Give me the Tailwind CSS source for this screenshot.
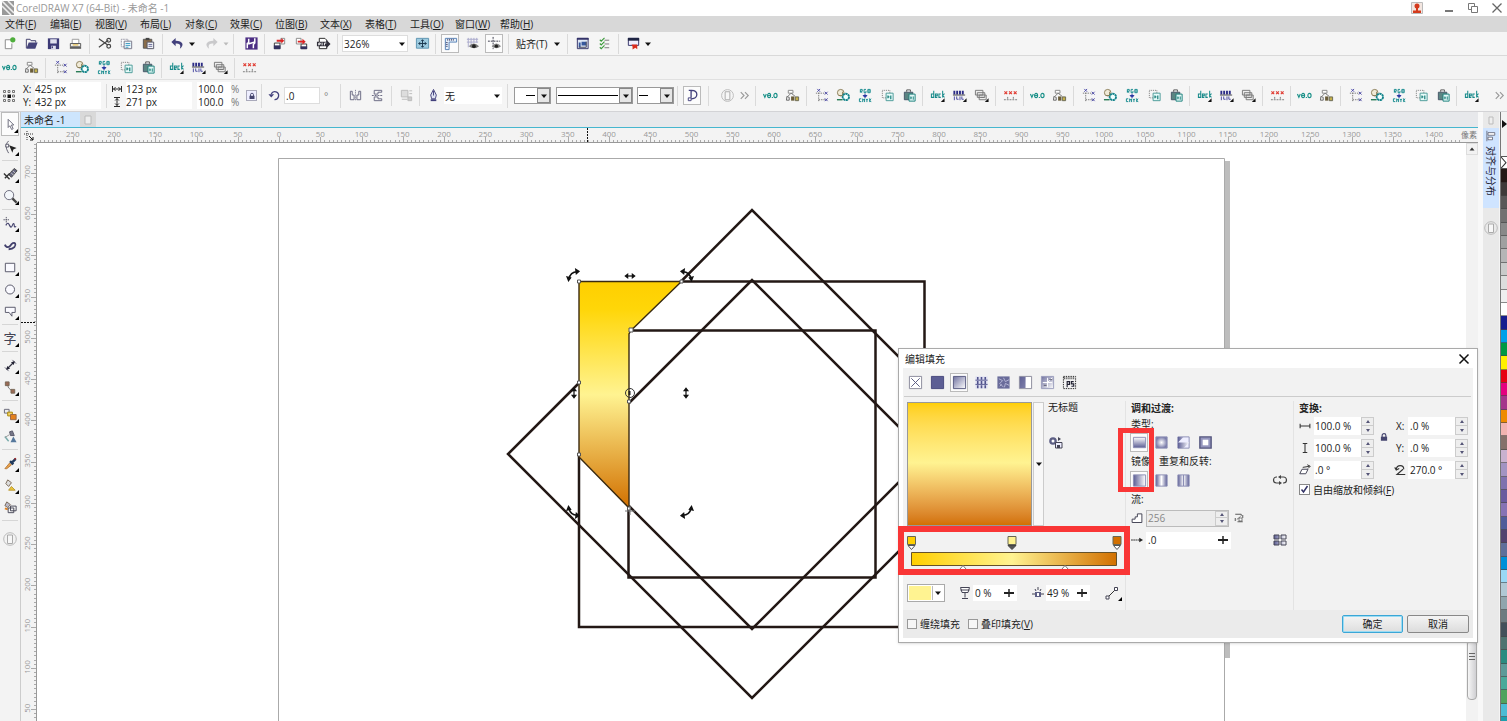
<!DOCTYPE html>
<html lang="zh-CN">
<head>
<meta charset="utf-8">
<title>CorelDRAW X7 (64-Bit) - 未命名 -1</title>
<script src="https://cdn.jsdelivr.net/npm/@tailwindcss/browser@4"></script>
</head>
<body class="h-screen overflow-hidden bg-[#f4f4f4] text-[#222] text-[10px] leading-none font-['Open_Sans','Noto_Sans_CJK_SC',sans-serif]">
<!-- icon library, 16 x 16 grid -->
<svg class="absolute size-0">
<defs>
<linearGradient id="gold" x1="0" y1="0" x2="0" y2="1"><stop offset="0" stop-color="#ffcf00"/><stop offset=".12" stop-color="#ffd608"/><stop offset=".5" stop-color="#fff391"/><stop offset="1" stop-color="#d27000"/></linearGradient>
<linearGradient id="goldh"><stop offset="0" stop-color="#ffcf00"/><stop offset=".49" stop-color="#fff391"/><stop offset="1" stop-color="#d27000"/></linearGradient>
<linearGradient id="gv" x1="0" y1="0" x2="0" y2="1"><stop offset="0" stop-color="#fff"/><stop offset="1" stop-color="#5b5d94"/></linearGradient>
<linearGradient id="gd" x1="0" y1="0" x2="1" y2="1"><stop offset="0" stop-color="#6f719f"/><stop offset="1" stop-color="#fff"/></linearGradient>
<linearGradient id="gh"><stop offset="0" stop-color="#5b5d94"/><stop offset="1" stop-color="#fff"/></linearGradient>
<linearGradient id="gm"><stop offset="0" stop-color="#5b5d94"/><stop offset=".5" stop-color="#fff"/><stop offset="1" stop-color="#5b5d94"/></linearGradient>
<radialGradient id="gr"><stop offset="0" stop-color="#fff"/><stop offset="1" stop-color="#7b7dab"/></radialGradient>
</defs>
<symbol id="logo" viewBox="0 0 16 16"><path d="M2 1h12v14H2z" fill="#999"/><path d="M2 1l12 12M2 6l9 9M8 1l6 6" stroke="#eee" stroke-width="1.6"/></symbol>
<symbol id="new" viewBox="0 0 16 16"><path d="M9.500 4H3.500v9.500h7V8" fill="#fff" stroke="#888"/><circle cx="11.500" cy="4" r="2.800" fill="#4fae3c"/></symbol>
<symbol id="open" viewBox="0 0 16 16"><path d="M2.500 13V3.500h4l1 1.500h5v2" fill="none" stroke="#3c3a66"/><path d="M2.500 13.500L5 7h9.500l-2.500 6.500z" fill="#45437a"/></symbol>
<symbol id="save" viewBox="0 0 16 16"><path d="M2 2.500h12v11.500H2z" fill="#3c3a76"/><path d="M4.500 3.500h7V8h-7zM5.500 10.500h5v3.500h-5z" fill="#dfe0ee"/><path d="M6 11h1.500v2H6z" fill="#3c3a76"/></symbol>
<symbol id="print" viewBox="0 0 16 16"><path d="M4.500 8V3.500h7V8" fill="#fff" stroke="#999"/><path d="M2.500 8h11v3.500h-11z" fill="#eee" stroke="#555"/><path d="M2 12h12v1.500H2z" fill="#3a3a3a"/><path d="M5 9.500h6" stroke="#e0b020"/></symbol>
<symbol id="cut" viewBox="0 0 16 16"><path d="M2 3l9.500 6.500M2 12L12 4.500" stroke="#444" stroke-width="1.300" fill="none"/><circle cx="12.500" cy="4.500" r="2" fill="none" stroke="#444" stroke-width="1.300"/><circle cx="12.500" cy="11" r="2" fill="none" stroke="#444" stroke-width="1.300"/></symbol>
<symbol id="copy" viewBox="0 0 16 16"><path d="M2.500 3.500h7v8h-7z" fill="#fff" stroke="#889" stroke-dasharray="1 .6"/><path d="M5.500 5.500h8v8h-8z" fill="#eef6fb" stroke="#778"/><path d="M7 8h5M7 10h5M7 12h3" stroke="#3b9ac0"/></symbol>
<symbol id="paste" viewBox="0 0 16 16"><path d="M2.500 3.500h9v9.500h-9z" fill="#8a6d4a" stroke="#555"/><path d="M5 2h4v2.500H5z" fill="#444"/><path d="M6.500 6.500h7v7h-7z" fill="#f3f6f8" stroke="#556"/><path d="M8 9h4M8 11h4" stroke="#669"/></symbol>
<symbol id="undo" viewBox="0 0 16 16"><path d="M6 2L1.500 6.500 6 11V8c4 0 6 1 4.500 5.500C15.500 10 14 5 6 5z" fill="#42407c"/></symbol>
<symbol id="redo" viewBox="0 0 16 16"><path d="M10 2l4.500 4.500L10 11V8c-4 0-6 1-4.500 5.500C.5 10 2 5 10 5z" fill="#c9c9cb"/></symbol>
<symbol id="search" viewBox="0 0 16 16"><path d="M1.500 1.500h13v13h-13z" fill="#4c2e84"/><path d="M5 3v4l-1.500 1V13M11.500 2.500v5L10 9v4M4.500 8.500l7-2" fill="none" stroke="#fff" stroke-width="1.600"/></symbol>
<symbol id="import" viewBox="0 0 16 16"><path d="M2.500 7.500h6v6h-6z" fill="#fff" stroke="#333"/><path d="M2 10h7v4H2z" fill="#33315e"/><path d="M9.500 2.500h4v6h-4z" fill="#fff" stroke="#888"/><path d="M5 6V4h5V2l3 3-3 3V6z" fill="#d22"/></symbol>
<symbol id="export" viewBox="0 0 16 16"><path d="M7.500 8.500h6v5h-6z" fill="#fff" stroke="#333"/><path d="M7 11h7v3H7z" fill="#33315e"/><path d="M2.500 2.500h5v6h-5z" fill="#fff" stroke="#888"/><path d="M4 7V5h5V3l3.500 3L9 9V7z" fill="#d22"/></symbol>
<symbol id="pdf" viewBox="0 0 16 16"><path d="M3.500 13.500v-11h6l2 2v9z" fill="#fff" stroke="#222"/><path d="M1 6h10V4l4.500 4.500L11 13v-2H1z" fill="#302f3a"/><path d="M3 10V7.500h1.500v1.300H3M6.500 7v3M9 10V7.500h2" fill="none" stroke="#fff"/></symbol>
<symbol id="full" viewBox="0 0 16 16"><path d="M1.500 2.500h13v10.500h-13z" fill="#9dcbe0" stroke="#5b93b0"/><path d="M8 4v8M4 8h8M6.500 5.500L8 4l1.500 1.500M6.500 10.500L8 12l1.500-1.500M5.500 6.500L4 8l1.500 1.500M10.500 6.500L12 8l-1.500 1.500" stroke="#17344c" fill="none"/></symbol>
<symbol id="rulers" viewBox="0 0 16 16"><path d="M2.500 2.500h12v4h-8v8h-4z" fill="#e5f0fa" stroke="#557fb4"/><path d="M5 3v2M7 3v2M9 3v2M11 3v2M3 7h2M3 9h2M3 11h2" stroke="#557"/></symbol>
<symbol id="grid" viewBox="0 0 16 16"><path d="M2 3.500h12M2 6.500h12M3.500 2v10M6.500 2v10M9.500 2v5M12.500 2v5" stroke="#a9a9cc"/><path d="M4 11q5-6 11 0-5 4-11 0z" fill="#777"/><circle cx="9.500" cy="10.800" r="2" fill="#222"/></symbol>
<symbol id="guides" viewBox="0 0 16 16"><path d="M6.500 1v13M1 5.500h13" stroke="#334" stroke-dasharray="2 1"/><path d="M5 11q5-6 10 0-5 4-10 0z" fill="#888"/><circle cx="10" cy="10.800" r="1.800" fill="#222"/></symbol>
<symbol id="launch" viewBox="0 0 16 16"><path d="M2.500 2.500h11.500v11h-11.500z" fill="#dfe7f5" stroke="#333268"/><path d="M2 2h12.500v2H2z" fill="#333268"/><path d="M4 7h2v5H4zM7 6h5v4H7z" fill="#37589d"/><path d="M4 12h8V6" stroke="#445" fill="none"/></symbol>
<symbol id="opts" viewBox="0 0 16 16"><path d="M3 4l1.500 1.500L8 2M3 8l1.500 1.500L8 6M3 12l1.500 1.500L8 10" stroke="#3a9a3a" fill="none" stroke-width="1.200"/><path d="M8 4.500h5M8 8.500h5M8 12.500h5" stroke="#777"/></symbol>
<symbol id="app" viewBox="0 0 16 16"><path d="M2.500 2.500h11v7.500h-11z" fill="#eef" stroke="#333268"/><path d="M2 2h12v3H2z" fill="#1f2544"/><path d="M6 9h6v5l-2-1.500-3 2 0-3z" fill="#d92b1e"/></symbol>
<symbol id="v80" viewBox="0 0 16 16"><path d="M.5 6.500L2 10l1.500-3.500" stroke="#199088" fill="none" stroke-width="1.200"/><ellipse cx="6.500" cy="8" rx="1.600" ry="2.300" stroke="#199088" fill="none" stroke-width="1.200"/><path d="M5 8h3" stroke="#199088"/><path d="M10 9.500v1.200" stroke="#199088" stroke-width="1.200"/><ellipse cx="13.300" cy="8" rx="1.700" ry="2.300" stroke="#199088" fill="none" stroke-width="1.200"/></symbol>
<symbol id="tree" viewBox="0 0 16 16"><path d="M3.500 2.500h5v3h-5z" fill="#fff" stroke="#888"/><path d="M6.500 5.500L3 9M6.500 5.500L11 9" stroke="#777" fill="none"/><path d="M2 9l2.500 1v3H1.500z" fill="#eee" stroke="#666"/><path d="M6.500 9h3.500v4.500H6.500z" fill="#6a5d3a"/><path d="M11 9.500h3.500v4H11z" fill="#c5b04a" stroke="#665"/></symbol>
<symbol id="nodes" viewBox="0 0 16 16"><path d="M5 5v9M2 5.500h11M5 12.500h9" stroke="#777" stroke-dasharray="1.500 1"/><path d="M3.500 1l3 3m0-3l-3 3M11.500 4l3 3m0-3l-3 3M11.500 11l3 3m0-3l-3 3" stroke="#4a48a6"/></symbol>
<symbol id="gear" viewBox="0 0 16 16"><circle cx="5" cy="5" r="3.500" fill="#f0ead6" stroke="#8a7d58"/><path d="M3 8h4V4" fill="none" stroke="#8a7d58"/><circle cx="10.500" cy="9.500" r="3.400" fill="#f2ffff" stroke="#15848b" stroke-width="2" stroke-dasharray="2.500 .5"/><path d="M1 12.500h6" stroke="#2b7d57" stroke-width="1.500"/></symbol>
<symbol id="rgb" viewBox="0 0 16 16"><path d="M2.500 5V1.500h2v2h-2l2 1.500M8.500 1.500h-2V5h2V3M10.500 1.500V5h2.500V1.500zM10.500 3.200h2.500M3.500 11.500H1.500v3h2M5 15v-3.500l1 1.500 1-1.500V15M8.500 11.500l1 1.500 1-1.500M9.500 13v2M14 11.500L12.500 13 14 15M12.500 11v4" stroke="#12898d" fill="none"/><path d="M7.500 6v2M5.500 8h4L7.500 10.200z" fill="#2432a0" stroke="#2432a0"/></symbol>
<symbol id="dashcopy" viewBox="0 0 16 16"><path d="M2.500 2.500h8v8h-8z" fill="none" stroke="#777" stroke-dasharray="1 1"/><path d="M6.500 5.500h7.500v8h-7.500z" fill="#e8fbfa" stroke="#4a9a97"/><path d="M8.500 8v3M8 9.500h2M11.500 8v4" stroke="#1b807b" stroke-width="1.300" fill="none"/></symbol>
<symbol id="bagcopy" viewBox="0 0 16 16"><path d="M2.500 4.500h9v8h-9z" fill="#5b8583" stroke="#456"/><path d="M5 4V2h4v2" stroke="#555" fill="none"/><path d="M7.500 6.500h6.500v7.500h-6.500z" fill="#e0f7f6" stroke="#1b807b"/><path d="M9.500 9v3M9 10.500h1.500M12 9v3.500" stroke="#1b807b" fill="none"/></symbol>
<symbol id="deck" viewBox="0 0 16 16"><path d="M4 3v7H1.500V6.500H4M5.800 8.200h2V6.500h-2V10h2M11.500 6.500h-2V10h2M13.500 3v7M15.500 6l-2 2 2 2" stroke="#178a8a" fill="none" stroke-width="1.100"/><path d="M15.500 11v4h-4z" fill="#111"/></symbol>
<symbol id="bars" viewBox="0 0 16 16"><path d="M2.500 3v4M5.500 3v4M8.500 3v4M11.500 3v4" stroke="#2b2b86" stroke-width="2"/><path d="M1 7.500h13" stroke="#444"/><path d="M2.500 9v4M5 9v3h2M8.500 9v4M10.500 9v3h2" stroke="#4646a0" fill="none"/><path d="M15.500 11v4h-4z" fill="#111"/></symbol>
<symbol id="stack" viewBox="0 0 16 16"><path d="M1.500 2.500h8v5h-8zM3.500 5h8v5h-8zM5.500 7.500h7.500v5H5.500z" fill="#eee" stroke="#777"/><path d="M7 10h4" stroke="#777"/><path d="M15.500 11v4h-4z" fill="#111"/></symbol>
<symbol id="xxx" viewBox="0 0 16 16"><path d="M1.500 3.500l3 3m0-3l-3 3M6.500 3.500l3 3m0-3l-3 3M11.500 3.500l3 3m0-3l-3 3" stroke="#e0392f" stroke-width="1.200"/><path d="M1 12.500h14M5 9.500v3M11 9.500v3" stroke="#777" stroke-dasharray="2 1"/></symbol>
<symbol id="origin" viewBox="0 0 16 16"><path d="M2.500 2.500h2v2h-2zM7 2.500h2v2H7zM11.500 2.500h2v2h-2zM2.500 7h2v2h-2zM11.500 7h2v2h-2zM2.500 11.500h2v2h-2zM7 11.500h2v2H7zM11.500 11.500h2v2h-2z" fill="none" stroke="#555" stroke-width=".8"/><path d="M6.500 6.500h3.500V10H6.500z" fill="#111"/></symbol>
<symbol id="wd" viewBox="0 0 16 16"><path d="M2 4v8M14 4v8M3 8h10M6 5.500L3.500 8 6 10.500M10 5.500L12.500 8 10 10.500" stroke="#222" stroke-width="1.300" fill="none"/></symbol>
<symbol id="ht" viewBox="0 0 16 16"><path d="M4 2h8M4 14h8M8 3v10M5.500 6L8 3.500 10.500 6M5.500 10L8 12.500 10.500 10" stroke="#222" stroke-width="1.300" fill="none"/></symbol>
<symbol id="lock" viewBox="0 0 16 16"><path d="M5 8V5.500a3 3 0 016 0V8" stroke="#45456f" fill="none" stroke-width="1.800"/><path d="M3 7.500h10V14H3z" fill="#45456f"/></symbol>
<symbol id="rot" viewBox="0 0 16 16"><path d="M4 6a4.800 4.800 0 114 7" stroke="#42407c" fill="none" stroke-width="1.600"/><path d="M.5 6.500h7L4 10.500z" fill="#42407c"/></symbol>
<symbol id="mirh" viewBox="0 0 16 16"><path d="M2.500 3.500v9h4v-5h-2v-4zM13.500 3.500v9h-4v-5h2v-4z" fill="none" stroke="#666680"/><path d="M8 2v12" stroke="#666680" stroke-dasharray="1 1"/></symbol>
<symbol id="mirv" viewBox="0 0 16 16"><path d="M4.500 2.500h8v2h-4v2h-4zM4.500 13.500h8v-2h-4v-2h-4z" fill="none" stroke="#666680"/><path d="M2 8h12" stroke="#666680" stroke-dasharray="2 1"/></symbol>
<symbol id="wrap" viewBox="0 0 16 16"><path d="M2.500 2.500h7v7h-7z" fill="#ddd" stroke="#bbb"/><path d="M3 12h6M11 3h3M11 6h3M9.500 9.500h4v4h-4z" stroke="#bbb" fill="#ccc"/></symbol>
<symbol id="pen" viewBox="0 0 16 16"><path d="M8 1.500l3 6-1 4H6l-1-4z" fill="#dfe3f2" stroke="#42407c"/><path d="M8 3v5" stroke="#42407c"/><path d="M5 12h6v2H5z" fill="#42407c"/></symbol>
<symbol id="dcurve" viewBox="0 0 16 16"><path d="M4 2.500h3c7.500 0 7.500 9 0 9H6M6.500 2.500v8" fill="none" stroke="#42407c" stroke-width="1.400"/><path d="M3.500 10.500h3v3h-3z" fill="#fff" stroke="#42407c"/></symbol>
<symbol id="plus0" viewBox="0 0 16 16"><circle cx="8" cy="8" r="6.300" fill="none" stroke="#bbb"/><path d="M5.500 4h5v8.500h-5z" fill="#f7f7f7" stroke="#aaa"/></symbol>
<symbol id="more" viewBox="0 0 16 16"><path d="M4 4.500L7.500 8 4 11.500M8.500 4.500L12 8l-3.500 3.500" fill="none" stroke="#999" stroke-width="1.200"/></symbol>
<symbol id="dn" viewBox="0 0 8 8"><path d="M1 2.500h6L4 6z" fill="#111"/></symbol>
<symbol id="dng" viewBox="0 0 8 8"><path d="M1.500 2.500h5L4 5.500z" fill="#bbb"/></symbol>
<!-- toolbox -->
<symbol id="pick" viewBox="0 0 16 16"><path d="M5.500 2.500l6 6H9l1.800 4-1.600.8-1.900-4-1.800 1.900z" fill="#fff" stroke="#667"/></symbol>
<symbol id="shape" viewBox="0 0 16 16"><path d="M6 1C2 5 3 9 6 14" fill="none" stroke="#556"/><path d="M3 4.500h3v3H3z" fill="#fff" stroke="#556"/><path d="M6.500 5.500l8 3-3.500 1.500-1 3.500z" fill="#222"/></symbol>
<symbol id="crop" viewBox="0 0 16 16"><path d="M6 8l6-6.500 3 2.500-6 7z" fill="#66667f" stroke="#444"/><path d="M8.500 6l3 3M10.500 4l3 3" stroke="#ccc"/><path d="M1 7l6 6M2 12l5-5" stroke="#333" stroke-width="1.500"/></symbol>
<symbol id="zoomt" viewBox="0 0 16 16"><circle cx="6.500" cy="6.500" r="4.900" fill="#f3f6fa" stroke="#667"/><path d="M10 10l4.500 4.500" stroke="#444" stroke-width="2.400"/></symbol>
<symbol id="free" viewBox="0 0 16 16"><path d="M3.500 1v6M.5 4h6" stroke="#556" stroke-dasharray="1.500 .7"/><path d="M3 10c2-4 3-2 4 0s2 3 3 0 2-2 2 0 1 2 2 1" fill="none" stroke="#42406c" stroke-width="1.200"/></symbol>
<symbol id="art" viewBox="0 0 16 16"><path d="M2 7c1.500 4 5 3 6 1s4-4 5-2-1 6-7 6" fill="none" stroke="#42406c" stroke-width="1.900"/></symbol>
<symbol id="rect" viewBox="0 0 16 16"><path d="M2.500 3.500h10v9h-10z" fill="#fafaff" stroke="#556"/></symbol>
<symbol id="ell" viewBox="0 0 16 16"><circle cx="7.500" cy="8" r="4.800" fill="#fafaff" stroke="#556"/></symbol>
<symbol id="call" viewBox="0 0 16 16"><path d="M2.500 3.500H13v5.500h-3.500v4l-3-4h-4z" fill="#fafaff" stroke="#556"/></symbol>
<symbol id="dim" viewBox="0 0 16 16"><path d="M4 12l8-8" stroke="#334" stroke-width="1.300"/><path d="M2 10l4 4M10 2l4 4" stroke="#667"/><path d="M3.500 12.500l1-4 3 3zM12.500 3.500l-1 4-3-3z" fill="#223"/></symbol>
<symbol id="conn" viewBox="0 0 16 16"><path d="M4.500 4.500l1.500 4L10 12" fill="none" stroke="#777"/><path d="M2.500 2h4v4h-4zM8.500 10h4v4h-4z" fill="#9a6a55" stroke="#765"/></symbol>
<symbol id="blend" viewBox="0 0 16 16"><path d="M1.500 2.500h5v4h-5z" fill="#eee" stroke="#667"/><path d="M5 5.500h5v4H5z" fill="#f3d36a" stroke="#a80"/><path d="M8 8h6v5.500H8z" fill="#e5811d" stroke="#964"/></symbol>
<symbol id="glass" viewBox="0 0 16 16"><path d="M7 3l3-1 2 5H8z" fill="#778" stroke="#556"/><path d="M2 8l4 5" stroke="#7aa" stroke-width="1.500"/><path d="M11 8l3.500 6H8z" fill="#56789c"/><path d="M2 9l5-3" stroke="#999"/></symbol>
<symbol id="drop" viewBox="0 0 16 16"><path d="M2 13.500l5-6 2 2-5 4z" fill="#e9a24c" stroke="#b97c3c"/><path d="M7.500 5.500l3.500 3.500M9.500 7l4-4" stroke="#203a5c" stroke-width="2.600"/><path d="M12.500 2.500l1 1" stroke="#a22" stroke-width="2"/></symbol>
<symbol id="fill" viewBox="0 0 16 16"><path d="M5 2l4 3-3 4-3-3z" fill="#ddd" stroke="#765"/><path d="M9 9l4 4H6z" fill="#eac53c" stroke="#b93"/></symbol>
<symbol id="smart" viewBox="0 0 16 16"><path d="M4 2l4 3-3 3-3-2z" fill="#b9b9c9" stroke="#765"/><path d="M2 9l3 1" stroke="#e08020" stroke-width="2"/><path d="M5.500 8.500h6v5h-6zM8 6.500h6v5H8z" fill="none" stroke="#445"/></symbol>
<symbol id="al" viewBox="0 0 16 16"><path d="M1 13.500h14" stroke="#556"/><path d="M3.500 3h3.500v9H3.500zM9.500 6H13v6H9.500z" fill="#fff" stroke="#556"/></symbol>
<!-- fill dialog -->
<symbol id="f0" viewBox="0 0 16 16"><path d="M1.500 1.500h13v13h-13z" fill="#fff" stroke="#889"/><path d="M3.500 3.500l9 9M12.500 3.500l-9 9" stroke="#55577f"/></symbol>
<symbol id="f1" viewBox="0 0 16 16"><path d="M1.500 1.500h13v13h-13z" fill="#5c5e94" stroke="#46487c"/></symbol>
<symbol id="f2" viewBox="0 0 16 16"><path d="M1.500 1.500h13v13h-13z" fill="url(#gd)" stroke="#55577f"/></symbol>
<symbol id="f3" viewBox="0 0 16 16"><path d="M1.500 1.500h13v13h-13z" fill="#dfe0f2"/><path d="M4 2v12M8 2v12M12 2v12" stroke="#50528c" stroke-width="1.700" stroke-dasharray="3 1.500"/><path d="M1.500 5.500h13M1.500 10h13" stroke="#50528c"/></symbol>
<symbol id="f4" viewBox="0 0 16 16"><path d="M1.500 1.500h13v13h-13z" fill="#6a6c9a"/><path d="M3 4l4 2-3 3 4 4M8 3l2 4 4-2M9 13l1-4 4 2M4 12l2-2" stroke="#b6b7d6" fill="none"/></symbol>
<symbol id="f5" viewBox="0 0 16 16"><path d="M1.500 1.500h13v13h-13z" fill="#fff" stroke="#889"/><path d="M2 2h6v12H2z" fill="url(#gd)"/><path d="M2 2h6v12H2z" fill="#5c5e94" opacity=".8"/></symbol>
<symbol id="f6" viewBox="0 0 16 16"><path d="M1.500 1.500h13v13h-13z" fill="url(#gd)" stroke="#999cbb"/><path d="M3 8h10M8 3v10M8 8l5-5" stroke="#fff"/><path d="M4 11h3M10 5h3" stroke="#556" /></symbol>
<symbol id="f7" viewBox="0 0 16 16"><path d="M1.500 1.500h13v13h-13z" fill="none" stroke="#222" stroke-dasharray="1.500 1"/><path d="M2 3.500h12" stroke="#444" stroke-width="2" stroke-dasharray="1 1"/><path d="M5.500 13V7H8v3H5.500M12.500 7H10v2.500h2.500V12H10" stroke="#223" fill="none" stroke-width="1.200"/></symbol>
<symbol id="t1" viewBox="0 0 16 16"><path d="M1.500 2.500h13v11h-13z" fill="url(#gv)" stroke="#8b8db4"/></symbol>
<symbol id="t2" viewBox="0 0 16 16"><path d="M2 2h12v12H2z" fill="url(#gr)" stroke="#8b8db4"/></symbol>
<symbol id="t3" viewBox="0 0 16 16"><path d="M2 2h12v12H2z" fill="#eef" stroke="#8b8db4"/><path d="M2 8V2h6zM2 8h12l-6 6H2z" fill="url(#gh)"/></symbol>
<symbol id="t4" viewBox="0 0 16 16"><path d="M2 2h12v12H2z" fill="#9495bd" stroke="#55577f" stroke-width="1.500"/><path d="M5 5h6v6H5z" fill="#fff"/></symbol>
<symbol id="m1" viewBox="0 0 16 16"><path d="M1.500 2h13v12h-13z" fill="url(#gh)" stroke="#8b8db4"/></symbol>
<symbol id="m2" viewBox="0 0 16 16"><path d="M2 2h12v12H2z" fill="url(#gm)" stroke="#8b8db4"/></symbol>
<symbol id="m3" viewBox="0 0 16 16"><path d="M2 2h6v12H2zM8 2h6v12H8z" fill="url(#gm)" stroke="#8b8db4"/></symbol>
<symbol id="savef" viewBox="0 0 16 16"><circle cx="5" cy="7" r="3.800" fill="#5c5e84"/><circle cx="5" cy="7" r="1.500" fill="#fff"/><path d="M7.500 8.500h6.500V14H7.500z" fill="#eef" stroke="#445"/><path d="M9 11h3v3H9zM10 3v4l3-2z" fill="#445"/></symbol>
<symbol id="steps" viewBox="0 0 16 16"><path d="M1.500 14v-4.500h4V6.500h3V2.500h6V14z" fill="#fff" stroke="#445" stroke-width="1.300"/></symbol>
<symbol id="arr" viewBox="0 0 16 16"><path d="M0 8h12" stroke="#333" stroke-width="1.300" stroke-dasharray="2.500 .5"/><path d="M11 5L16 8l-5 3z" fill="#222"/></symbol>
<symbol id="loop" viewBox="0 0 16 16"><path d="M5 5H4.500a3 3 0 000 6H7M11 11h.5a3 3 0 000-6H8" fill="none" stroke="#444" stroke-width="1.200"/><path d="M9 3v4L6 5zM7 9v4l3-2z" fill="#444"/></symbol>
<symbol id="quad" viewBox="0 0 16 16"><path d="M2 3h5v4H2zM9 3h5v4H9zM2 9h5v4H2zM9 9h5v4H9z" fill="url(#gh)" stroke="#445"/></symbol>
<symbol id="sync" viewBox="0 0 16 16"><path d="M3 3h8v2M13 4v4M13 13H6M3 12V8" stroke="#555" stroke-width="1.300" fill="none"/><path d="M5 10l5-4M8 8h4v4H8z" stroke="#555" fill="#fff"/></symbol>
<symbol id="iw" viewBox="0 0 16 16"><path d="M1.500 5v6M14.500 5v6M2 8h12" stroke="#333" stroke-width="1.400" fill="none"/></symbol>
<symbol id="ih" viewBox="0 0 16 16"><path d="M5 2h6M5 14h6M8 2v12" stroke="#333" stroke-width="1.400" fill="none"/></symbol>
<symbol id="skew" viewBox="0 0 16 16"><path d="M1 13l3-6h8l-3 6z" fill="#fff" stroke="#445" stroke-width="1.300"/><path d="M5 4.500l9-1.500M11 1l4 2-3 3" stroke="#333" stroke-width="1.300" fill="none"/></symbol>
<symbol id="ang" viewBox="0 0 16 16"><path d="M3 7c1-6.500 10-6.500 10 0M1 4.500L3 8l4-2M15 14H4l8-7" stroke="#333" fill="none" stroke-width="1.500"/></symbol>
<symbol id="opac" viewBox="0 0 16 16"><path d="M3.500 2.500h9L11 7.500H5zM8 7.500v5M5 13.500h6M3.500 5h9" fill="#fff" stroke="#445"/></symbol>
<symbol id="posn" viewBox="0 0 16 16"><path d="M2 9h12M8 2v3M5 4l1 2M11 4l-1 2" stroke="#445"/><path d="M5 7h6v5H5z" fill="#5c5e84"/><path d="M7 8h2v3H7z" fill="#fff"/></symbol>
<symbol id="smooth" viewBox="0 0 16 16"><path d="M3.500 12.500l8-8" stroke="#333"/><path d="M2 11h3v3H2zM10.500 2.500h3v3h-3z" fill="#fff" stroke="#445"/></symbol>
<symbol id="rotarrow" viewBox="0 0 16 16"><path d="M3 12C4 7 7 4 12 4" fill="none" stroke="#111" stroke-width="1.700"/><path d="M0 8.500L6 10 2.500 15zM9.500 0L15 3.500 10.500 7.500z" fill="#111"/></symbol>
<symbol id="lr" viewBox="0 0 16 16"><path d="M4 8h8" stroke="#111" stroke-width="1.400"/><path d="M1.500 8L6 4.500v7zM14.500 8L10 4.500v7z" fill="#111"/></symbol>
</svg>

<div class="relative flex h-full flex-col">
  <header class="flex h-4 shrink-0 items-center bg-white pr-1 text-[#999]">
    <svg class="size-4 shrink-0"><use href="#logo"/></svg>
    <h1 class="text-[10px] font-normal">CorelDRAW X7 (64-Bit) - 未命名 -1</h1>
    <div class="ml-auto flex items-center gap-3">
      <svg class="mr-2 size-3" viewBox="0 0 12 12"><path d="M.5.5h11v11H.5z" fill="#f3e6e0" stroke="#bbb"/><circle cx="6" cy="4" r="2.500" fill="#d43a1c"/><path d="M2 11V8.500h3V6h2v2.500h3V11z" fill="#d43a1c"/></svg>
      <button aria-label="最小化"><svg class="size-3" viewBox="0 0 12 12"><path d="M2 9h8" stroke="#777" stroke-width="2"/></svg></button>
      <button aria-label="还原"><svg class="size-3" viewBox="0 0 12 12"><path d="M1.500 1.500h6v6h-6z" fill="#fff" stroke="#777"/><path d="M4.500 4.500h6v6h-6z" fill="#fff" stroke="#777"/></svg></button>
      <button aria-label="关闭"><svg class="size-3" viewBox="0 0 12 12"><path d="M1.500 1.500l9 9M10.500 1.500l-9 9" stroke="#666" stroke-width="1.300"/></svg></button>
    </div>
  </header>
  <nav id="menu" class="flex h-4 shrink-0 items-center gap-[15px] bg-[#d8d8d8] pl-[5px] text-[#222]"></nav>
  <div id="bar1" class="flex h-6 shrink-0 items-center border-b border-[#d9d9d9] bg-[#f5f5f5]"></div>
  <div id="bar2" class="flex h-6 shrink-0 items-center border-b border-[#e0e0e0] bg-[#f3f3f3]"></div>
  <div id="bar3" class="flex h-8 shrink-0 items-center overflow-hidden border-b border-[#d3d3d6] bg-[#f5f5f5]"></div>

  <div class="flex min-h-0 flex-1">
    <aside id="tools" class="flex w-[21px] shrink-0 flex-col items-center border-r border-[#ccc] bg-[#f3f3f3]"></aside>
    <main class="flex min-w-0 flex-1 flex-col">
      <div class="flex h-[15px] shrink-0 bg-[#e7e8eb]">
        <button class="w-[59px] bg-[#cde5fd] pl-[3px] text-left text-[#222]">未命名 -1</button>
        <button aria-label="新建文档" class="flex w-4 items-center justify-center bg-[#d9d9d9]"><svg class="size-3" viewBox="0 0 12 12"><path d="M3 2h6v8H3z" fill="#eee" stroke="#bbb"/></svg></button>
      </div>
      <div class="flex h-4 shrink-0 border-t border-[#45b6cf] bg-[#f3f3f3]">
        <div class="flex w-4 shrink-0 items-center justify-center"><svg class="size-3" viewBox="0 0 12 12"><path d="M4 1v10M1 4h10" stroke="#333" stroke-dasharray="1 1"/><path d="M6 6l4 4M10 7v3H7" stroke="#111" fill="none"/></svg></div>
        <svg id="hr" class="h-full min-w-0 flex-1 overflow-hidden border-b border-[#999]"></svg>
      </div>
      <div class="flex min-h-0 flex-1">
        <svg id="vr" class="h-full w-4 shrink-0 overflow-hidden border-r border-[#999] bg-[#f3f3f3]"></svg>
        <svg class="h-full min-w-0 flex-1 overflow-hidden bg-white">
          <g transform="translate(-37,-143)">
            <path d="M1224 161h6v497h-6z" fill="#bdbdbd"/>
            <path d="M278.500 730V158.500h946V730" fill="#fff" stroke="#aaa"/>
            <g fill="none" stroke="#231815" stroke-width="2.500">
              <path d="M682 281.500H924.500V627H579V456"/>
              <path d="M630 330.500H875.500v247H628.500V507"/>
              <path d="M682 280.500L752 210 996 454 752 698 508 454l71-71"/>
              <path d="M629 403L752 280l174.500 174.500L752 629 629 506"/>
            </g>
            <path d="M579 281.500h102.500l-51 49.500-1.500 3v174l-50-51z" fill="url(#gold)" stroke="#3a2a10" stroke-width="1.400"/>
            <use href="#rotarrow" x="566" y="268" width="15" height="15"/>
            <use href="#rotarrow" width="15" height="15" transform="translate(694 268) scale(-1 1)"/>
            <use href="#rotarrow" width="15" height="15" transform="translate(566 519) scale(1 -1)"/>
            <use href="#rotarrow" width="15" height="15" transform="translate(694 519) scale(-1 -1)"/>
            <use href="#lr" x="623" y="269" width="14" height="14"/>
            <use href="#lr" width="14" height="14" transform="translate(581 386) rotate(90)"/>
            <use href="#lr" width="14" height="14" transform="translate(693 386) rotate(90)"/>
            <circle cx="630" cy="393" r="4.500" fill="none" stroke="#333"/>
            <path d="M629.500 391v4" stroke="#222" stroke-width="2"/>
            <g fill="#fff" stroke="#555"><path d="M577.500 280h3v3h-3zM680 280h3v3h-3zM629 328h4v4h-4zM577.500 381h3v3h-3zM627.500 400h3v3h-3zM577.500 453h3v3h-3zM627.500 507h3v3h-3z"/></g>
            <path d="M625 511h10M630 506v9" stroke="#777"/>
          </g>
        </svg>
        <div class="flex w-[12px] shrink-0 flex-col items-center bg-[#f2f2f2]">
          <button aria-label="向上滚动" class="flex h-3 w-full items-center justify-center border border-[#ddd]"><svg class="size-2" viewBox="0 0 8 8"><path d="M1.500 5.500h5L4 2.500z" fill="#333"/></svg></button>
          <div class="mt-auto mb-[21px] flex h-[60px] w-[10px] items-center justify-center rounded-sm border border-[#a9a9a9] bg-linear-to-r from-[#f6f6f6] to-[#cfcfd2]"><svg class="mb-7 h-2 w-1.5" viewBox="0 0 6 8"><path d="M0 1.500h6M0 4.500h6M0 7.500h6" stroke="#666"/></svg></div>
        </div>
      </div>
    </main>
    <div class="w-[5px] shrink-0 bg-[#f8f8f8]"></div>
    <aside class="flex w-4 shrink-0 flex-col items-center bg-[#e9e9e9]">
      <svg class="my-0.5 size-3" viewBox="0 0 12 12"><path d="M4 3h4v7H4z" fill="#eee" stroke="#bbb"/></svg>
      <button class="flex h-20 w-full flex-col items-center gap-1 bg-[#cfe4ff] pt-0.5 text-[#223]"><svg class="size-3 rotate-90"><use href="#al"/></svg><span class="[writing-mode:vertical-rl] [text-orientation:sideways]">对齐与分布</span></button>
      <svg class="mt-3 size-4"><use href="#plus0"/></svg>
    </aside>
    <aside class="ml-px flex w-[7px] shrink-0 flex-col border-l border-[#777] bg-[#f3f3f3]">
      <div class="flex h-11 shrink-0 pt-2"><svg class="h-2 w-full" viewBox="0 0 6 8"><path d="M1 0v8l5-4z" fill="#111"/></svg></div>
      <div id="pal" class="grid min-h-0 flex-1 grid-rows-42"></div>
      <div class="h-1 shrink-0 bg-[#1c9fae]"></div>
    </aside>
  </div>

  <!-- edit-fill dialog -->
  <section role="dialog" aria-label="编辑填充" class="absolute top-[348px] left-[898px] w-[580px] border border-[#aaa] bg-white px-1 pb-1 text-[#222] shadow-sm">
    <div class="flex h-[19px] items-center justify-between pr-[3px] pl-0.5"><h2 class="text-[10px]/[10px] font-normal">编辑填充</h2><button aria-label="关闭"><svg class="size-3" viewBox="0 0 12 12"><path d="M1.500 1.500l9 9M10.500 1.500l-9 9" stroke="#111" stroke-width="1.500"/></svg></button></div>
    <div class="bg-[#f2f2f2] px-0.5">
      <div id="ftypes" class="-ml-px flex h-[29px] items-center border-b border-[#ccc]"></div>
      <div class="flex h-[213px] pt-1">
        <div class="w-[220px] shrink-0 pt-px pl-0.5">
          <div class="flex">
            <div class="h-[124px] w-[125px] border border-[#999] bg-linear-to-b from-[#ffcf00] via-[#fff391] via-49% to-[#d27000]"></div>
            <button aria-label="填充挑选器" class="ml-px flex w-[11px] items-center justify-center border border-[#ccc] bg-[#f8f8f8]"><svg class="size-2 shrink-0"><use href="#dn"/></svg></button>
            <div class="pl-1"><p>无标题</p><button aria-label="保存填充" class="mt-[22px]"><svg class="size-4"><use href="#savef"/></svg></button></div>
          </div>
          <svg class="block h-[55px] w-[214px] overflow-visible">
            <path d="M4.500 26.500h205v13H4.500z" fill="url(#goldh)" stroke="#66522a"/>
            <path d="M.5 10.500h8v8h-8z" fill="#ffcf00" stroke="#665"/><path d="M1 19.500h7l-3.500 4z" fill="#fff" stroke="#555"/>
            <path d="M101 10.500h8v8h-8z" fill="#fff391" stroke="#665"/><path d="M101 19.500h8l-4 4z" fill="#555" stroke="#444"/>
            <path d="M206 10.500h8v8h-8z" fill="#d27000" stroke="#665"/><path d="M206.500 19.500h7l-3.500 4z" fill="#fff" stroke="#555"/>
            <path d="M53 43l3-3.500 3 3.500M155 43l3-3.500 3 3.500" fill="#fff" stroke="#777"/>
          </svg>
          <div class="flex h-5 items-center pt-1">
            <button aria-label="节点颜色" class="flex h-[18px] w-[38px] items-center border border-[#aaa] bg-white p-px"><span class="h-full w-[22px] bg-[#fff391]"></span><span class="ml-px flex h-full flex-1 items-center justify-center border-l border-[#bbb]"><svg class="size-2"><use href="#dn"/></svg></span></button>
            <svg class="ml-3 size-4 shrink-0"><use href="#opac"/></svg>
            <label class="flex h-4 items-center bg-white"><input aria-label="透明度" value="0 %" class="w-7 pl-0.5"><svg class="h-3 w-4" viewBox="0 0 12 12"><path d="M1 6h10" stroke="#222" stroke-width="2"/><path d="M6 2v8" stroke="#222" stroke-width="1.500"/></svg></label>
            <svg class="ml-[13px] size-4 shrink-0"><use href="#posn"/></svg>
            <label class="flex h-4 items-center bg-white"><input aria-label="位置" value="49 %" class="w-7 pl-px"><svg class="h-3 w-4" viewBox="0 0 12 12"><path d="M1 6h10" stroke="#222" stroke-width="2"/><path d="M6 2v8" stroke="#222" stroke-width="1.500"/></svg></label>
            <button aria-label="平滑" class="ml-[14px] flex items-end"><svg class="size-4"><use href="#smooth"/></svg><svg class="-ml-0.5 size-1" viewBox="0 0 4 4"><path d="M4 0v4H0z"/></svg></button>
          </div>
        </div>
        <div class="w-[168px] shrink-0 border-l border-[#e3e3e3] pl-[5px]">
          <h3 class="h-[14px] text-[10px]/[14px] font-bold">调和过渡:</h3>
          <p class="mt-0.5 leading-[14px]">类型:</p>
          <div id="types" class="flex h-[23px] items-center"></div>
          <p class="flex gap-2 leading-[14px]"><span>镜像</span><span>重复和反转:</span></p>
          <div id="mirrors" class="flex h-6 items-center pr-[5px]"></div>
          <p class="leading-[14px]">流:</p>
          <div class="mt-[3px] flex h-[18px] items-center"><svg class="size-3"><use href="#steps"/></svg>
            <label class="ml-[3px] flex h-[17px] items-center border border-[#bbb] bg-[#ececec]" data-spin><input aria-label="步长" disabled value="256" class="w-[68px] pl-px text-[#888]"></label>
            <svg class="ml-1 size-3"><use href="#sync"/></svg></div>
          <div class="mt-1 flex h-[18px] items-center"><svg class="size-3"><use href="#arr"/></svg>
            <label class="ml-[3px] flex h-[17px] items-center bg-white"><input aria-label="加速" value=".0" class="w-[69px] pl-0.5"><svg class="h-3 w-4" viewBox="0 0 12 12"><path d="M1 6h10" stroke="#222" stroke-width="2"/><path d="M6 2v8" stroke="#222" stroke-width="1.500"/></svg></label>
            <button aria-label="平滑过渡" class="mr-[5px] ml-auto"><svg class="size-4"><use href="#quad"/></svg></button></div>
        </div>
        <div class="min-w-0 flex-1 border-l border-[#e3e3e3] pl-[5px]">
          <h3 class="h-[14px] text-[10px]/[14px] font-bold">变换:</h3>
          <div class="mt-[2px] grid grid-cols-[15px_60px_20px_14px_60px] gap-y-1 *:h-[18px]">
            <svg class="w-3"><use href="#iw"/></svg><label class="flex items-center bg-white" data-spin><input aria-label="宽" value="100.0 %" class="w-[47px] pl-px"></label>
            <svg class="row-span-2 mt-[11px] ml-1 w-3 p-px"><use href="#lock"/></svg><span class="pl-0.5 leading-[18px]">X:</span><label class="flex items-center bg-white" data-spin><input aria-label="X" value=".0 %" class="w-[47px] pl-0.5"></label>
            <svg class="w-3"><use href="#ih"/></svg><label class="flex items-center bg-white" data-spin><input aria-label="高" value="100.0 %" class="w-[47px] pl-px"></label>
            <span class="pl-0.5 leading-[18px]">Y:</span><label class="flex items-center bg-white" data-spin><input aria-label="Y" value=".0 %" class="w-[47px] pl-0.5"></label>
            <svg class="w-3"><use href="#skew"/></svg><label class="flex items-center bg-white" data-spin><input aria-label="倾斜" value=".0 °" class="w-[47px] pl-px"></label>
            <span></span><svg class="w-3"><use href="#ang"/></svg><label class="flex items-center bg-white" data-spin><input aria-label="旋转" value="270.0 °" class="w-[47px] pl-0.5"></label>
          </div>
          <label class="mt-[5px] flex items-center gap-[3px]"><span class="relative flex"><input type="checkbox" checked class="peer size-[11px] appearance-none border border-[#888] bg-white"><svg class="pointer-events-none absolute inset-0 size-[11px]" viewBox="0 0 11 11"><path d="M2.500 5.500l2 2.500 4-6" fill="none" stroke="#336" stroke-width="1.500"/></svg></span><span>自由缩放和倾斜(<u>F</u>)</span></label>
        </div>
      </div>
    </div>
    <div class="flex h-7 items-center bg-[#ebebeb] pr-1 pl-1">
      <label class="flex items-center gap-[3px]"><input type="checkbox" class="size-[10px] appearance-none border border-[#999] bg-[#f6f6f6]">缠绕填充</label>
      <label class="ml-2 flex items-center gap-[3px]"><input type="checkbox" class="size-[10px] appearance-none border border-[#999] bg-[#f6f6f6]"><span>叠印填充(<u>V</u>)</span></label>
      <button class="ml-auto h-[18px] w-[61px] rounded-xs border border-[#3ba6d6] bg-linear-to-b from-[#f4f4f4] to-[#dedede] ring-1 ring-[#9bdcf3] ring-inset">确定</button>
      <button class="ml-1 h-[18px] w-[62px] rounded-xs border border-[#888] bg-linear-to-b from-[#f4f4f4] to-[#dcdcdc]">取消</button>
    </div>
  </section>
  <!-- annotation frames -->
  <div class="pointer-events-none absolute top-[428px] left-[1118px] h-[64px] w-[36px] border-[5px] border-[#f93636]"></div>
  <div class="pointer-events-none absolute top-[526px] left-[898px] h-[49px] w-[232px] border-[6px] border-[#f93636]"></div>
</div>

<script>
const $ = id => document.getElementById(id);
const btn = (n, on) => `<button aria-label="${n}" class="${on ? 'flex h-[19px] w-[18px] mx-[2px] shrink-0 items-center justify-center border border-[#bbb] bg-[#fcfcfc]' : 'flex h-5 w-[22px] shrink-0 items-center justify-center'}"><svg class="size-[15px] shrink-0"><use href="#${n}"/></svg></button>`;
const sep = '<span class="mx-[3px] h-5 w-px shrink-0 bg-[#dadada]"></span>';
const sep6 = '<span class="mr-[3px] ml-[2px] h-5 w-px shrink-0 bg-[#dadada]"></span>';
const sep5 = '<span class="mx-[2px] h-5 w-px shrink-0 bg-[#dadada]"></span>';
const dn = n => `<svg class="size-2 shrink-0"><use href="#${n}"/></svg>`;
const row = a => a.map(n => btn(n)).join('');

$('menu').innerHTML = ['文件F','编辑E','视图V','布局L','对象C','效果C','位图B','文本X','表格T','工具O','窗口W','帮助H']
  .map(m => `<a href="#" class="w-[30px] shrink-0 whitespace-nowrap">${m.slice(0,2)}(<u>${m[2]}</u>)</a>`).join('');

$('bar1').innerHTML = '<span class="-ml-[2px]"></span>' + row(['new','open','save','print']) + sep + row(['cut','copy','paste']) + sep +
  btn('undo') + `<span class="w-3">${dn('dn')}</span>` + btn('redo') + `<span class="w-2">${dn('dng')}</span>` + sep + '<span class="w-[3px]"></span>' + btn('search') + sep6 + row(['import','export','pdf']) + sep +
  `<label class="ml-px flex h-[17px] w-[66px] shrink-0 items-center border border-[#ddd] bg-white pr-px"><input aria-label="缩放级别" value="326%" class="min-w-0 flex-1 pl-px">${dn('dn')}</label>` +
  '<span class="w-[3px]"></span>' + btn('full') + sep6 + btn('rulers',1) + btn('grid') + btn('guides',1) + sep +
  `<button class="ml-1 flex w-[45px] shrink-0 items-center justify-between whitespace-nowrap">贴齐(T)${dn('dn')}</button><span class="w-1"></span>` + sep6 + btn('launch') + btn('opts') + sep + btn('app') + dn('dn');

const set = row(['v80','tree']) + sep + row(['nodes','gear','rgb','dashcopy','bagcopy']) + sep6 + row(['deck','bars','stack']) + sep + btn('xxx');
$('bar2').innerHTML = '<span class="-ml-[2px]"></span>' + set;

const fld = (l, v, c) => `<label class="flex h-[13px] items-center">${l}<input value="${v}" aria-label="${v}" class="${c}"></label>`;
const combo = (w, line) => `<button aria-label="线条" class="${w}"><span class="${line}"></span><span class="ml-auto flex h-full w-[13px] items-center justify-center border border-[#888] bg-[#e6e6e6]">${dn('dn')}</span></button>`;
const ic = (n, c) => `<svg class="${c}"><use href="#${n}"/></svg>`;
$('bar3').innerHTML =
  ic('origin','mx-px size-4 shrink-0') +
  `<div class="ml-[5px] shrink-0">${fld('<span class="w-3">X:</span>','425 px','w-[66px] bg-white')}${fld('<span class="w-3">Y:</span>','432 px','w-[66px] bg-white')}</div>` +
  '<span class="mr-1 ml-[5px] h-6 w-px shrink-0 bg-[#dadada]"></span>' +
  `<div class="shrink-0">${fld(ic('wd','mr-[3px] h-3 w-3'),'123 px','w-[66px] bg-white')}${fld(ic('ht','mr-[3px] h-3 w-3'),'271 px','w-[66px] bg-white')}</div>` +
  `<div class="ml-[5px] shrink-0">${fld('','100.0','w-[34px] bg-white pl-px')}${fld('','100.0','w-[34px] bg-white pl-px')}</div><div class="w-[9px] shrink-0 leading-[13px] text-[#777]">%<br>%</div>` +
  '<button aria-label="锁定比率" class="ml-[6px] flex size-[11px] shrink-0 items-center justify-center border border-[#aab] bg-[#eef]">' + ic('lock','size-2') + '</button>' +
  '<span class="mx-1 h-6 w-px shrink-0 bg-[#dadada]"></span>' + ic('rot','ml-[2px] size-[13px] shrink-0') +
  '<input aria-label="旋转角度" value=".0" class="ml-[3px] h-[17px] w-9 shrink-0 border border-[#ddd] bg-white pl-px"><span class="w-[14px] shrink-0 pl-1 text-[#888]">°</span>' +
  '<span class="mr-[3px] ml-[6px] h-6 w-px shrink-0 bg-[#dadada]"></span>' + row(['mirh','mirv']) + sep + btn('wrap') + sep5 + btn('pen') +
  `<button class="flex h-[17px] w-[58px] shrink-0 items-center justify-between bg-white px-px"><span>无</span>${dn('dn')}</button>` + '<span class="mr-[6px] ml-[5px] h-6 w-px shrink-0 bg-[#dadada]"></span>' +
  combo('flex h-[17px] w-[37px] shrink-0 items-center border border-[#999] bg-white', 'ml-[11px] h-px w-[9px] bg-black') +
  combo('ml-[5px] flex h-[17px] w-[77px] shrink-0 items-center border border-[#999] bg-white', 'ml-px h-px w-[60px] bg-black') +
  combo('ml-1 flex h-[17px] w-[37px] shrink-0 items-center border border-[#999] bg-white', 'ml-px h-px w-[9px] bg-black') + sep +
  btn('dcurve',1) + '<span class="w-[2px] shrink-0"></span>' + sep + '<span class="w-1 shrink-0"></span>' + btn('plus0') + ic('more','-ml-px size-[15px] shrink-0') + sep +
  [set, set].join(sep5) + sep5 + row(['v80','tree']) + sep + row(['nodes','gear','rgb','dashcopy','bagcopy']) + sep6 + btn('deck') + '<span class="flex-1"></span>' + ic('more','size-[15px] shrink-0');

// toolbox: '|' marks a group break, '+' a flyout corner
const tool = s => {
  if (s === '|') return '<span class="my-[2px] h-px w-4 shrink-0 bg-[#d6d6d6]"></span>';
  const f = s.endsWith('+'), n = s.replace('+', '');
  const g = n === 'text' ? '<span class="text-[13px] font-normal text-[#445]">字</span>' : ic(n, 'size-[15px]');
  const c = f ? '<svg class="absolute right-0 bottom-0.5 size-1" viewBox="0 0 4 4"><path d="M4 0v4H0z"/></svg>' : '';
  return `<button aria-label="${n}" class="${n === 'pick' ? 'relative flex h-6 w-[18px] shrink-0 items-center justify-center border border-[#bbb] bg-[#fcfcfc]' : 'relative flex h-[22px] w-[18px] shrink-0 items-center justify-center'}">${g}${c}</button>`;
};
$('tools').innerHTML = ['pick+','shape+','|','crop+','zoomt+','|','free+','art','rect+','ell+','call+','|','text+','|','dim+','conn+','|','blend+','glass','|','drop+','fill+','smart','|'].map(tool).join('') + ic('plus0','mt-2 size-4 shrink-0');

// rulers: 41.25 px per 50 document pixels
const step = 41.25, tick = step / 10;
let h = '', v = '';
for (let i = -60; i < 290; i++) { const x = Math.round(242 + i * tick); if (x > 0 && x < 1425) h += `<path d="M${x}.5 ${i % 10 ? 12 : 9}V14" stroke="#aaa"/>`; }
for (let k = -5; k <= 28; k++) h += `<text x="${242 + k * step}" y="9" text-anchor="middle" font-size="8" fill="#999">${Math.abs(k * 50)}</text>`;
h += '<text x="1424" y="10" font-size="8" fill="#777">像素</text><path d="M550.500 0v15" stroke="#111" stroke-dasharray="2 1"/>';
$('hr').innerHTML = h;
for (let i = -7; i < 140; i++) { const y = Math.round(29.750 + i * tick); v += `<path d="M${i % 10 ? 13 : 10} ${y}.5H16" stroke="#aaa"/>`; }
for (let k = 0; k < 14; k++) v += `<text transform="translate(9 ${29 + k * step}) rotate(-90)" text-anchor="middle" font-size="8" fill="#999">${700 - k * 50}</text>`;
v += '<path d="M0 179.500h16" stroke="#111" stroke-dasharray="2 1"/>';
$('vr').innerHTML = v;

// colour palette: the first well is "no fill"
$('pal').innerHTML = '<svg class="h-full w-full border-y border-[#555] bg-white" viewBox="0 0 6 11" preserveAspectRatio="none"><path d="M0 0l5 5.500L0 11" fill="none" stroke="#333"/></svg>' + ('#231815 #3e3a39 #595757 #727171 #898989 #9fa0a0 #b5b5b6 #c9caca #dcdddd #efefef #ffffff #171c8f #00a0e9 #009944 #fff100 #e60012 #e4007f #a4358b #ee8a00 #f2b3b0 #86706a #c9b1cf #a294c2 #7f72ae #6a5b9e #8673b4 #4f5d99 #53426f #5f6f9a #0090d8 #99d8f5 #b0c8d4 #90a5ad #6d7b80 #44505a #4f7370 #2b8b80 #5c9a98 #4aa99a #50a35e #4bbcd4').split(' ')
  .map(c => `<span class="border-b border-[#444]/60" style="background:${c}"></span>`).join('');

$('ftypes').innerHTML = btn('f0') + btn('f1') + btn('f2', 1) + row(['f3','f4','f5','f6','f7']);
$('types').innerHTML = '<span class="-ml-[3px]"></span>' + btn('t1', 1) + row(['t2','t3','t4']);
$('mirrors').innerHTML = '<span class="-ml-[3px]"></span>' + btn('m1', 1) + row(['m2','m3']) + '<span class="flex-1"></span>' + ic('loop', 'size-4');
document.querySelectorAll('[data-spin]').forEach(e => e.insertAdjacentHTML('beforeend',
  '<span class="flex h-full w-[13px] flex-col items-center justify-around border border-[#ccc] bg-[#eee]"><svg class="h-[5px] w-2" viewBox="0 0 8 5"><path d="M2 4h4L4 1z" fill="#557"/></svg><span class="h-px w-full bg-[#ccc]"></span><svg class="h-[5px] w-2" viewBox="0 0 8 5"><path d="M2 1h4L4 4z" fill="#557"/></svg></span>'));
</script>
</body>
</html>
